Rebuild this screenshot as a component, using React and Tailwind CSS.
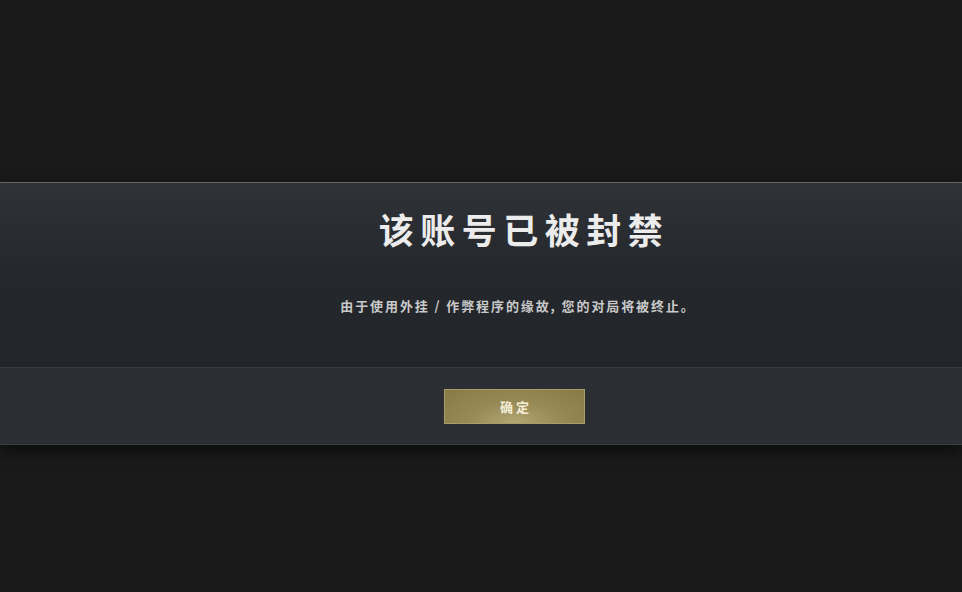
import React from 'react';

const BanNotice = () => {
  return (
    <div className="w-[962px] h-[592px] overflow-hidden bg-[#1a1a1b] flex flex-col" style={{ fontFamily: '"Noto Sans CJK SC", "Noto Sans", sans-serif' }}>
      <div className="h-[182px] shrink-0" />

      {/* BANNER */}
      <div className="shrink-0 border-t border-[#66655c] shadow-[0_6px_14px_rgba(0,0,0,0.55)]">
        <div className="h-[184px] bg-gradient-to-b from-[#2f3337] via-[#24282c] to-[#22262a] flex flex-col items-center pl-[78px]">
          <h1 className="mt-[28px] ml-[8px] text-[35px] leading-none font-bold tracking-[6.5px] text-[#ececec]">该账号已被封禁</h1>
          <p className="mt-[53px] ml-[-4px] text-[13px] leading-none font-bold tracking-[1.9px] text-[#c9c9c9]">
            由于使用外挂 / 作弊程序的缘故, 您的对局将被终止。
          </p>
        </div>
        <div className="h-[78px] border-t border-[#383c41] border-b border-b-[#3b3e42] bg-[#2b2f34] flex justify-center pl-[67px]">
          <button className="mt-[21px] w-[141px] h-[35px] border border-[#a99d65] bg-[radial-gradient(ellipse_at_50%_100%,#b3a776_0%,#978a56_45%,#877a46_100%)] text-[13px] font-bold tracking-[3px] text-[#f4eed6] flex items-center justify-center pl-[3px]">
            确定
          </button>
        </div>
      </div>

      <div className="flex-1" />
    </div>
  );
};

export default function App() {
  return <BanNotice />;
}
